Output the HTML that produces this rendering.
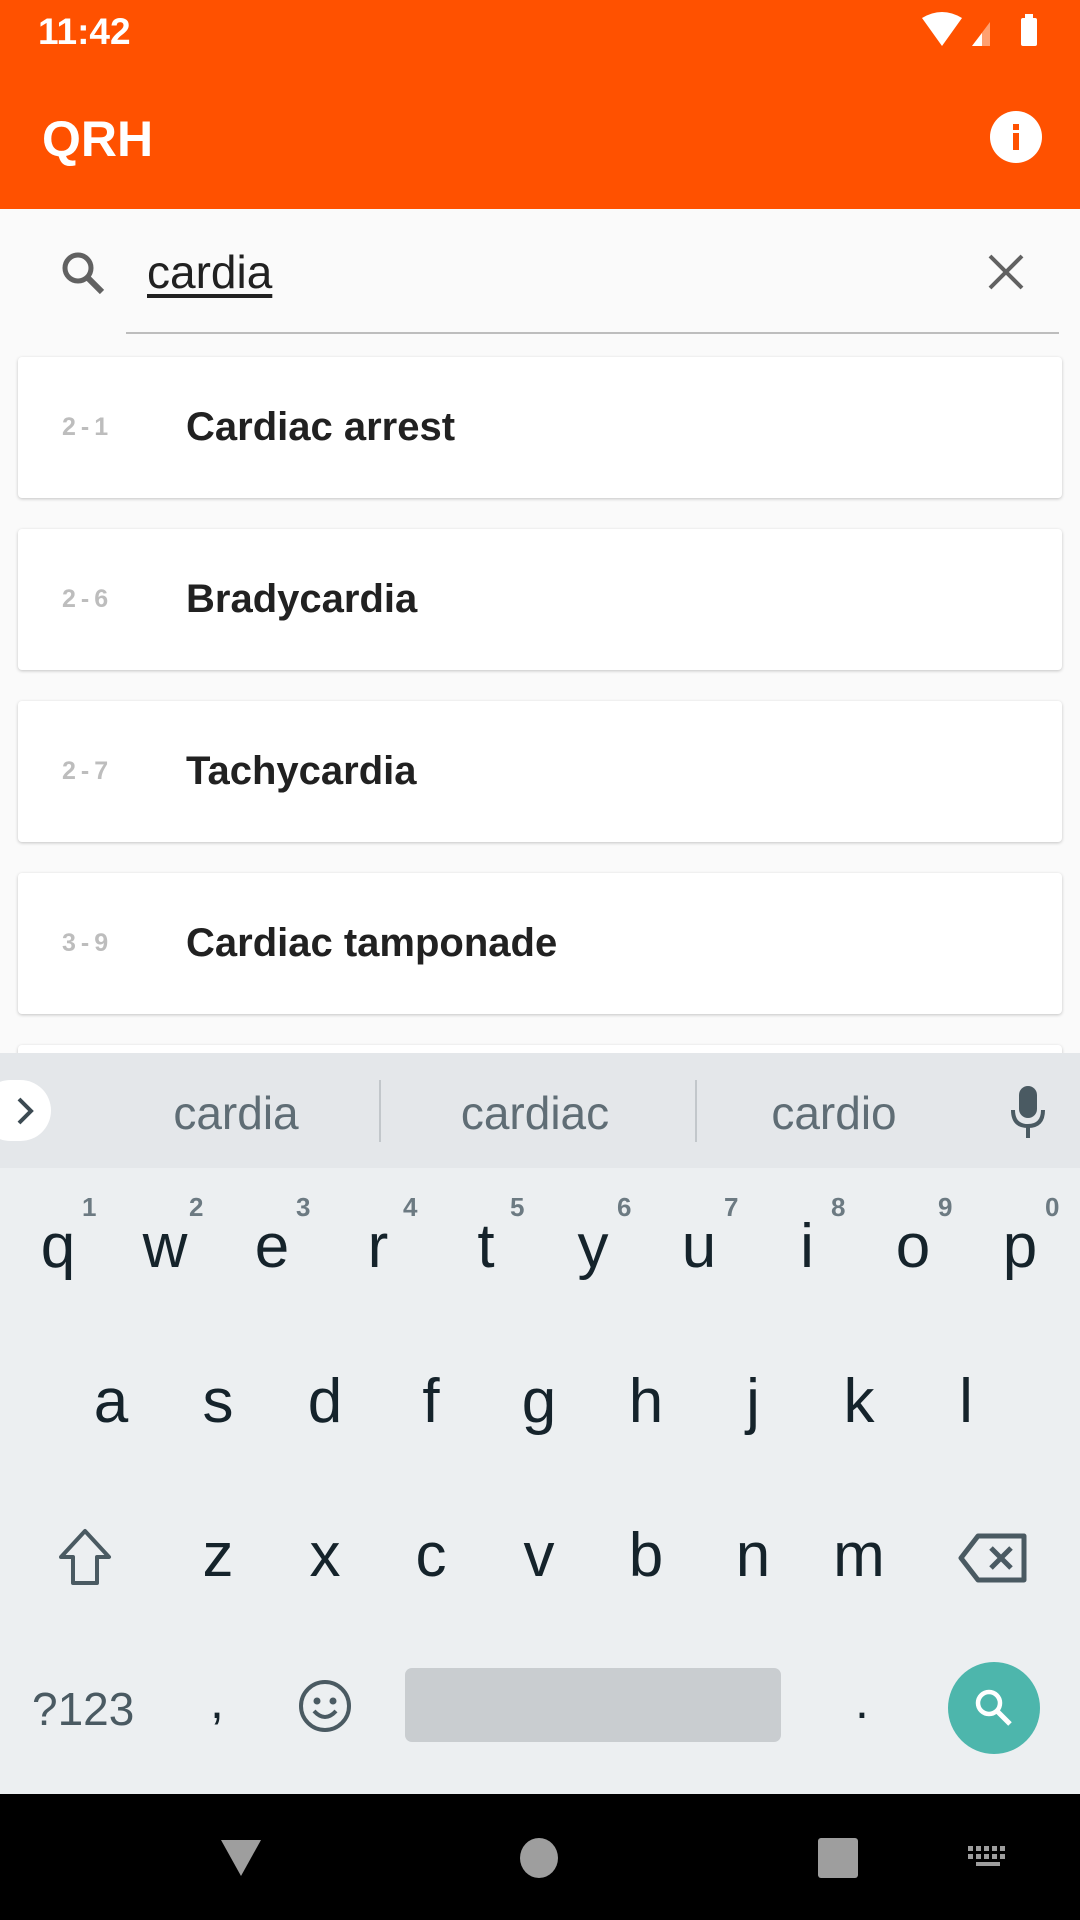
<!DOCTYPE html>
<html><head><meta charset="utf-8"><style>
*{margin:0;padding:0;box-sizing:border-box}
body{width:1080px;height:1920px;position:relative;overflow:hidden;background:#fafafa;font-family:"Liberation Sans",sans-serif}
.a{position:absolute}
.card{position:absolute;left:18px;width:1044px;height:141px;background:#fff;border-radius:4px;box-shadow:0 1px 3px rgba(0,0,0,.22)}
.num{position:absolute;left:44px;top:0;line-height:141px;font-size:25px;font-weight:bold;color:#bdbdbd;letter-spacing:5px}
.ttl{position:absolute;left:168px;top:0;line-height:141px;font-size:40px;font-weight:bold;color:#212121}
.k{position:absolute;width:108px;text-align:center;font-size:62px;color:#15232b;line-height:1}
.s{position:absolute;font-size:26px;color:#6c7a82;font-weight:bold}
.sg{position:absolute;top:1086px;font-size:46px;color:#5f6d75;width:300px;text-align:center;line-height:54px}
</style></head><body>
<div class="a" style="left:0;top:0;width:1080px;height:209px;background:#ff5100"></div>
<div class="a" style="left:38px;top:11px;font-size:37px;color:#fff;font-weight:bold">11:42</div>
<svg class="a" style="left:920px;top:12px" width="120" height="38" viewBox="0 0 120 38">
<path d="M2 6 Q22 -6 42 6 L22 34 Z" fill="#fff"/>
<path d="M52 34 L70 10 L70 34 Z" fill="#ffa070"/><path d="M52 34 L62 21 L62 34 Z" fill="#fff"/>
<rect x="101" y="6" width="16" height="28" rx="2" fill="#fff"/><rect x="105" y="2" width="8" height="5" fill="#fff"/>
</svg>
<div class="a" style="left:42px;top:110px;font-size:50px;color:#fff;font-weight:bold">QRH</div>
<svg class="a" style="left:990px;top:111px" width="52" height="52" viewBox="0 0 52 52"><circle cx="26" cy="26" r="26" fill="#fff"/><rect x="23" y="22" width="6" height="17" fill="#ff5100"/><rect x="23" y="13" width="6" height="6" fill="#ff5100"/></svg>
<svg class="a" style="left:58px;top:248px" width="50" height="50" viewBox="0 0 50 50"><circle cx="20" cy="20" r="13" fill="none" stroke="#616161" stroke-width="5"/><path d="M29 29 L44 44" stroke="#616161" stroke-width="6"/></svg>
<div class="a" style="left:147px;top:245px;font-size:46px;color:#212121;text-decoration:underline;text-underline-offset:6px">cardia</div>
<svg class="a" style="left:986px;top:252px" width="40" height="40" viewBox="0 0 40 40"><path d="M4 4L36 36M36 4L4 36" stroke="#616161" stroke-width="4"/></svg>
<div class="a" style="left:126px;top:332px;width:933px;height:2px;background:#bdbdbd"></div>
<div class="card" style="top:357px"><div class="num">2-1</div><div class="ttl">Cardiac arrest</div></div>
<div class="card" style="top:529px"><div class="num">2-6</div><div class="ttl">Bradycardia</div></div>
<div class="card" style="top:701px"><div class="num">2-7</div><div class="ttl">Tachycardia</div></div>
<div class="card" style="top:873px"><div class="num">3-9</div><div class="ttl">Cardiac tamponade</div></div>
<div class="card" style="top:1045px"></div>
<div class="a" style="left:0;top:1053px;width:1080px;height:115px;background:#e4e7ea"></div>
<div class="a" style="left:0;top:1168px;width:1080px;height:626px;background:#eceff1"></div>
<div class="a" style="left:-20px;top:1080px;width:71px;height:61px;border-radius:31px;background:#fff"></div>
<svg class="a" style="left:14px;top:1096px" width="24" height="30" viewBox="0 0 24 30"><path d="M5 3L17 15L5 27" fill="none" stroke="#3c4a52" stroke-width="4"/></svg>
<div class="sg" style="left:86px">cardia</div>
<div class="sg" style="left:385px">cardiac</div>
<div class="sg" style="left:684px">cardio</div>
<div class="a" style="left:379px;top:1080px;width:2px;height:62px;background:#c2c7cb"></div>
<div class="a" style="left:695px;top:1080px;width:2px;height:62px;background:#c2c7cb"></div>
<svg class="a" style="left:1010px;top:1086px" width="36" height="56" viewBox="0 0 36 56"><rect x="9" y="0" width="18" height="32" rx="9" fill="#4a5a62"/><path d="M3 24 Q3 40 18 40 Q33 40 33 24" fill="none" stroke="#4a5a62" stroke-width="4"/><rect x="16" y="40" width="4" height="12" fill="#4a5a62"/></svg>
<div class="k" style="left:4px;top:1216px">q</div><div class="k" style="left:111px;top:1216px">w</div><div class="k" style="left:218px;top:1216px">e</div><div class="k" style="left:324px;top:1216px">r</div><div class="k" style="left:432px;top:1216px">t</div><div class="k" style="left:539px;top:1216px">y</div><div class="k" style="left:645px;top:1216px">u</div><div class="k" style="left:753px;top:1216px">i</div><div class="k" style="left:859px;top:1216px">o</div><div class="k" style="left:966px;top:1216px">p</div>
<div class="s" style="left:82px;top:1192px">1</div><div class="s" style="left:189px;top:1192px">2</div><div class="s" style="left:296px;top:1192px">3</div><div class="s" style="left:403px;top:1192px">4</div><div class="s" style="left:510px;top:1192px">5</div><div class="s" style="left:617px;top:1192px">6</div><div class="s" style="left:724px;top:1192px">7</div><div class="s" style="left:831px;top:1192px">8</div><div class="s" style="left:938px;top:1192px">9</div><div class="s" style="left:1045px;top:1192px">0</div>
<div class="k" style="left:57px;top:1371px">a</div><div class="k" style="left:164px;top:1371px">s</div><div class="k" style="left:271px;top:1371px">d</div><div class="k" style="left:377px;top:1371px">f</div><div class="k" style="left:485px;top:1371px">g</div><div class="k" style="left:592px;top:1371px">h</div><div class="k" style="left:699px;top:1371px">j</div><div class="k" style="left:805px;top:1371px">k</div><div class="k" style="left:912px;top:1371px">l</div>
<svg class="a" style="left:55px;top:1527px" width="60" height="60" viewBox="0 0 60 60"><path d="M30 4L54 30H42V56H18V30H6Z" fill="none" stroke="#4a5a62" stroke-width="4" stroke-linejoin="round"/></svg>
<div class="k" style="left:164px;top:1525px">z</div><div class="k" style="left:271px;top:1525px">x</div><div class="k" style="left:377px;top:1525px">c</div><div class="k" style="left:485px;top:1525px">v</div><div class="k" style="left:592px;top:1525px">b</div><div class="k" style="left:699px;top:1525px">n</div><div class="k" style="left:805px;top:1525px">m</div>
<svg class="a" style="left:958px;top:1533px" width="70" height="50" viewBox="0 0 70 50"><path d="M20 3H66V47H20L3 25Z" fill="none" stroke="#4a5a62" stroke-width="5" stroke-linejoin="round"/><path d="M33 15L53 35M53 15L33 35" stroke="#4a5a62" stroke-width="5"/></svg>
<div class="a" style="left:32px;top:1682px;font-size:46px;color:#4a5a62">?123</div>
<div class="a" style="left:210px;top:1672px;font-size:50px;color:#15232b">,</div>
<svg class="a" style="left:298px;top:1679px" width="54" height="54" viewBox="0 0 54 54"><circle cx="27" cy="27" r="24" fill="none" stroke="#4a5a62" stroke-width="4"/><circle cx="19" cy="22" r="3.5" fill="#4a5a62"/><circle cx="35" cy="22" r="3.5" fill="#4a5a62"/><path d="M16 32Q27 44 38 32" fill="none" stroke="#4a5a62" stroke-width="4"/></svg>
<div class="a" style="left:405px;top:1668px;width:376px;height:74px;background:#c9cdd0;border-radius:7px"></div>
<div class="a" style="left:855px;top:1672px;font-size:50px;color:#15232b">.</div>
<div class="a" style="left:948px;top:1662px;width:92px;height:92px;border-radius:50%;background:#4db6ac"></div>
<svg class="a" style="left:970px;top:1684px" width="48" height="48" viewBox="0 0 48 48"><circle cx="19" cy="19" r="11" fill="none" stroke="#fff" stroke-width="4.5"/><path d="M27 27L40 40" stroke="#fff" stroke-width="5"/></svg>
<div class="a" style="left:0;top:1794px;width:1080px;height:126px;background:#000"></div>
<svg class="a" style="left:219px;top:1836px" width="44" height="44" viewBox="0 0 44 44"><path d="M2 4H42L22 40Z" fill="#9e9e9e"/></svg>
<div class="a" style="left:520px;top:1838px;width:38px;height:40px;border-radius:50%;background:#9e9e9e"></div>
<div class="a" style="left:818px;top:1838px;width:40px;height:40px;border-radius:3px;background:#9e9e9e"></div>
<svg class="a" style="left:968px;top:1846px" width="42" height="26" viewBox="0 0 42 26"><g fill="#9e9e9e"><rect x="0" y="0" width="5" height="5"/><rect x="8" y="0" width="5" height="5"/><rect x="16" y="0" width="5" height="5"/><rect x="24" y="0" width="5" height="5"/><rect x="32" y="0" width="5" height="5"/><rect x="0" y="8" width="5" height="5"/><rect x="8" y="8" width="5" height="5"/><rect x="16" y="8" width="5" height="5"/><rect x="24" y="8" width="5" height="5"/><rect x="32" y="8" width="5" height="5"/><rect x="8" y="16" width="24" height="4"/></g></svg>
</body></html>
